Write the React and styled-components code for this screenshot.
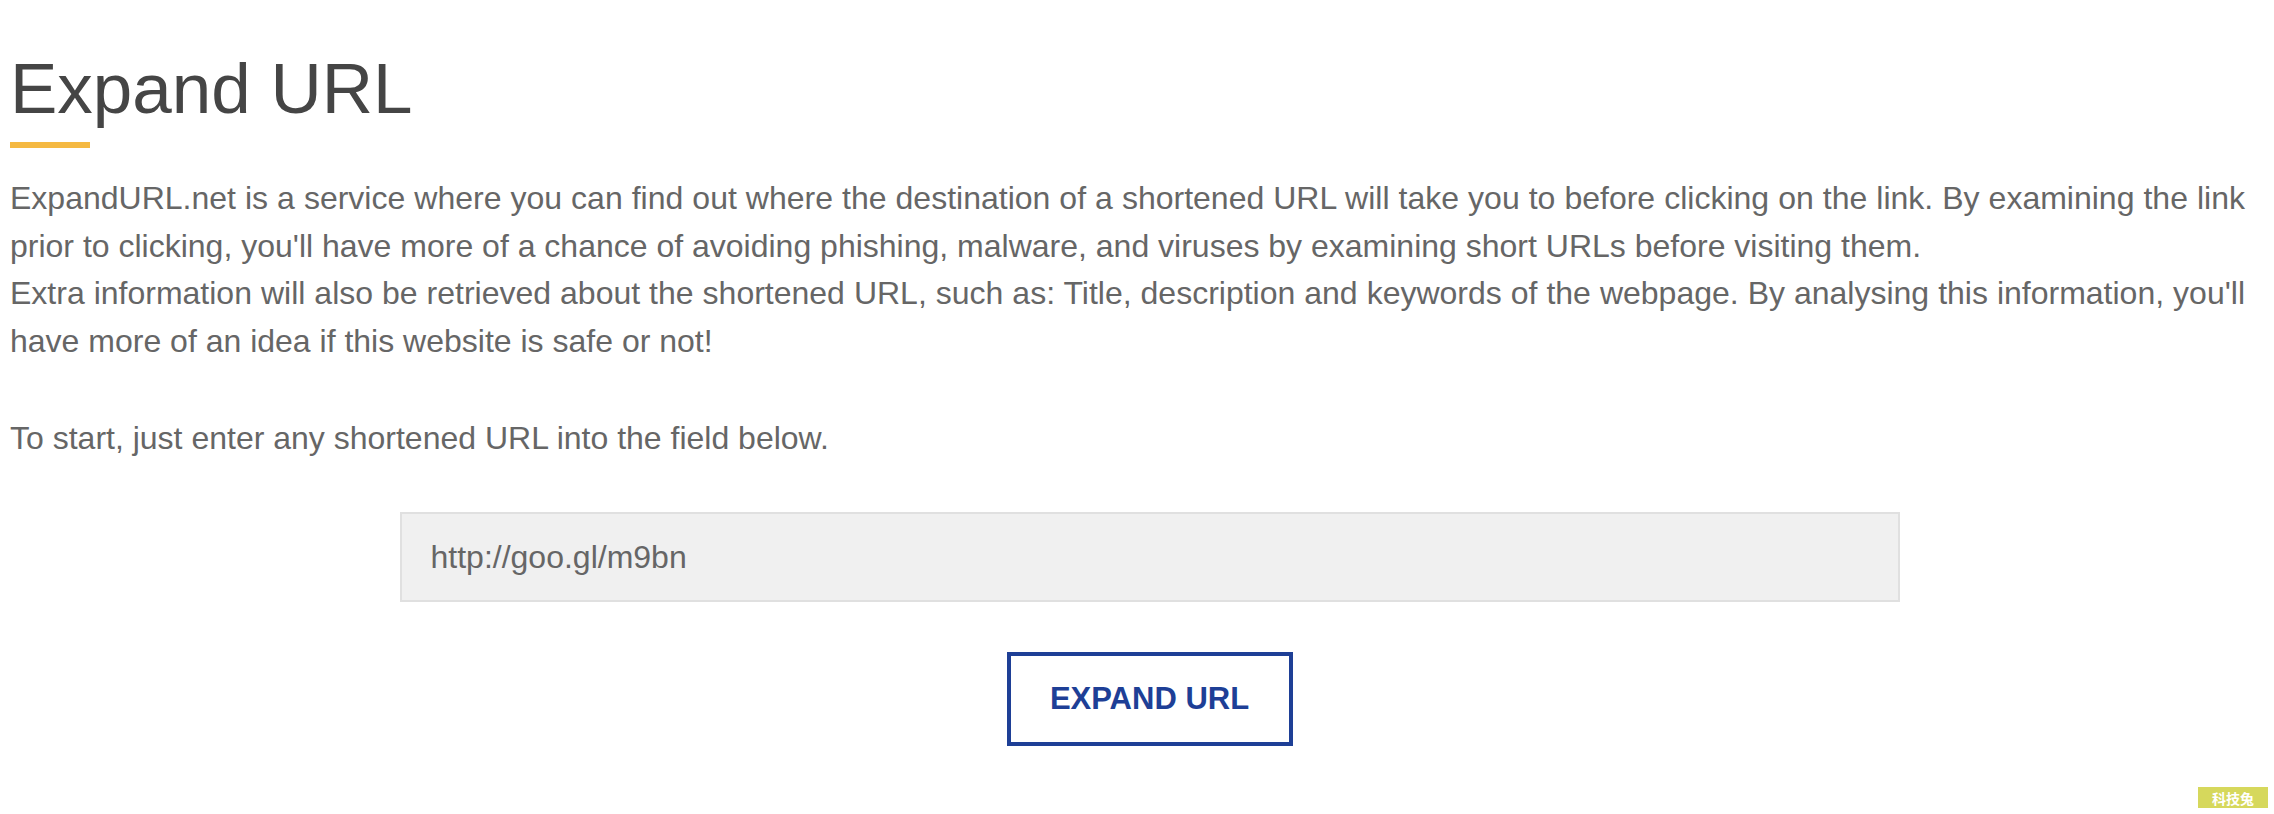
import React from "react";
import styled, { createGlobalStyle } from "styled-components";

const Global = createGlobalStyle`
  html, body { margin: 0; padding: 0; background: #fff; }
  body { font-family: "Liberation Sans", Arial, sans-serif; }
`;

const Page = styled.main`
  position: relative;
  width: 2274px;
  height: 814px;
  box-sizing: border-box;
  padding: 46px 29px 0 10px;
  overflow: hidden;
`;

const Title = styled.h1`
  margin: 0;
  font-size: 71px;
  line-height: 85px;
  font-weight: 400;
  color: #454545;
`;

const Accent = styled.div`
  width: 80px;
  height: 6px;
  margin-top: 11px;
  background: #f5b942;
`;

const Intro = styled.p`
  margin: ${(p) => (p.$gap ? "49.5px" : "27px")} 0 0;
  font-size: 32px;
  line-height: 47.5px;
  color: #666;
  text-align: justify;
`;

const Form = styled.form`
  display: flex;
  flex-direction: column;
  align-items: center;
  gap: 50px;
  margin-top: 50px;
  padding-left: 44px;
`;

const UrlInput = styled.input`
  box-sizing: border-box;
  width: 1500px;
  height: 90px;
  padding: 0 29px;
  border: 2px solid #e0e0e0;
  background: #f0f0f0;
  font-family: "Liberation Sans", Arial, sans-serif;
  font-size: 32px;
  color: #666;
  outline: none;
`;

const SubmitButton = styled.button`
  box-sizing: border-box;
  width: 286px;
  height: 94px;
  border: 4px solid #1e3f96;
  background: #fff;
  color: #1e3f96;
  font-family: "Liberation Sans", Arial, sans-serif;
  font-size: 31px;
  font-weight: 700;
  cursor: pointer;
`;

const Badge = styled.div`
  position: absolute;
  right: 6px;
  bottom: 6px;
  width: 70px;
  height: 21px;
  display: flex;
  align-items: center;
  justify-content: center;
  background: #d6d85c;
  color: #fff;
  font-family: "Noto Sans CJK SC", sans-serif;
  font-size: 14px;
  font-weight: 700;
  line-height: 1;
`;

export default function App() {
  return (
    <>
      <Global />
      <Page>
        <Title>Expand URL</Title>
        <Accent />
        <Intro>
          ExpandURL.net is a service where you can find out where the destination of a shortened URL will take you to before clicking on the link. By examining the link prior to clicking, you'll have more of a chance of avoiding phishing, malware, and viruses by examining short URLs before visiting them.
          <br />
          Extra information will also be retrieved about the shortened URL, such as: Title, description and keywords of the webpage. By analysing this information, you'll have more of an idea if this website is safe or not!
        </Intro>
        <Intro $gap>To start, just enter any shortened URL into the field below.</Intro>
        <Form onSubmit={(e) => e.preventDefault()}>
          <UrlInput type="text" defaultValue="http://goo.gl/m9bn" />
          <SubmitButton type="submit">EXPAND URL</SubmitButton>
        </Form>
        <Badge>科技兔</Badge>
      </Page>
    </>
  );
}
